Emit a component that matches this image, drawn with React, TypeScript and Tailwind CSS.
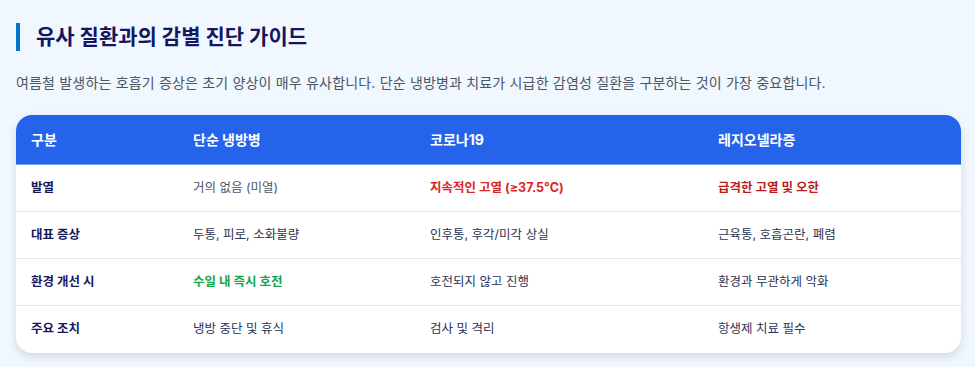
import React from "react";

const rows = [
  { k: "발열", a: "거의 없음 (미열)", b: "지속적인 고열 (≥37.5°C)", c: "급격한 고열 및 오한", ac: "text-[#4b5563]", bc: "text-[#dc2626] font-bold", cc: "text-[#b91c1c] font-bold" },
  { k: "대표 증상", a: "두통, 피로, 소화불량", b: "인후통, 후각/미각 상실", c: "근육통, 호흡곤란, 폐렴", ac: "text-[#2a3355]", bc: "text-[#2a3355]", cc: "text-[#2a3355]" },
  { k: "환경 개선 시", a: "수일 내 즉시 호전", b: "호전되지 않고 진행", c: "환경과 무관하게 악화", ac: "text-[#16a34a] font-bold", bc: "text-[#2a3355]", cc: "text-[#2a3355]" },
  { k: "주요 조치", a: "냉방 중단 및 휴식", b: "검사 및 격리", c: "항생제 치료 필수", ac: "text-[#2a3355]", bc: "text-[#2a3355]", cc: "text-[#2a3355]" },
];

export default function App() {
  return (
    <div
      className="w-[975px] h-[367px] bg-[#f0f7ff] px-4 pt-[23px]"
      style={{ fontFamily: '"Inter", "Noto Sans CJK KR", sans-serif' }}
    >
      <h2 className="border-l-4 border-[#0077c8] pl-4 text-[21px] leading-[28px] font-bold text-[#14175e]">
        유사 질환과의 감별 진단 가이드
      </h2>
      <p className="mt-[20px] text-[14px] tracking-[0.18px] leading-[24px] text-[#4b5563]">
        여름철 발생하는 호흡기 증상은 초기 양상이 매우 유사합니다. 단순 냉방병과 치료가 시급한 감염성 질환을 구분하는 것이 가장 중요합니다.
      </p>
      <div className="mt-[20px] w-[945px] rounded-2xl overflow-hidden bg-white shadow-[0_4px_10px_rgba(0,0,0,0.12)] text-[12.5px]">
        <div className="grid grid-cols-[162px_237px_288px_1fr] items-center h-[50px] bg-[#2563eb] text-white font-bold text-[14px] border-b border-[#6ea8f7]">
          <div className="pl-[15px]">구분</div>
          <div className="pl-[15px]">단순 냉방병</div>
          <div className="pl-[15px]">코로나19</div>
          <div className="pl-[15px]">레지오넬라증</div>
        </div>
        {rows.map((r, i) => (
          <div
            key={i}
            className={`grid grid-cols-[162px_237px_288px_1fr] items-center h-[47px] ${i < rows.length - 1 ? "border-b border-[#e5e7eb]" : ""}`}
          >
            <div className="pl-[15px] font-bold text-[#14175e]">{r.k}</div>
            <div className={`pl-[15px] ${r.ac}`}>{r.a}</div>
            <div className={`pl-[15px] ${r.bc}`}>{r.b}</div>
            <div className={`pl-[15px] ${r.cc}`}>{r.c}</div>
          </div>
        ))}
      </div>
    </div>
  );
}
